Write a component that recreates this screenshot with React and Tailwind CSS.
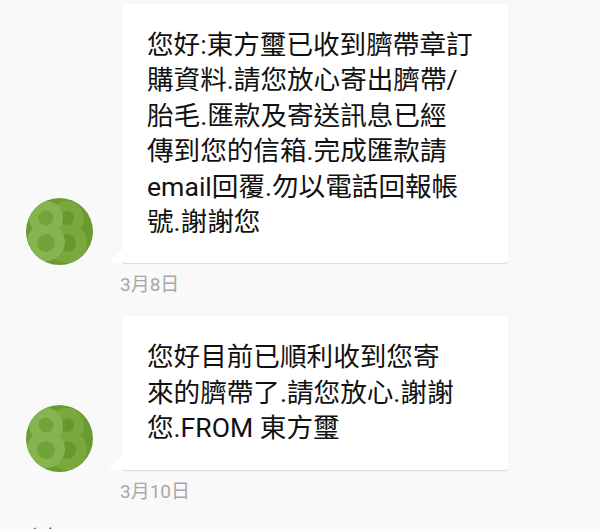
const FONT = "font-['Roboto','Noto_Sans_CJK_TC',sans-serif]";

function Avatar({ id }) {
  return (
    <svg width="67" height="67" viewBox="0 0 67 67" className="shrink-0">
      <defs>
        <clipPath id={id}>
          <circle cx="33.5" cy="33.5" r="33.5" />
        </clipPath>
      </defs>
      <g clipPath={`url(#${id})`}>
        <rect width="67" height="67" fill="#6b9a32" />
        <circle cx="41" cy="20" r="17" fill="#79a83e" />
        <circle cx="41" cy="45" r="20" fill="#79a83e" />
        <circle cx="41" cy="20" r="7" fill="#669730" />
        <circle cx="41" cy="45" r="9" fill="#669730" />
        <circle cx="20" cy="20" r="17" fill="#86b44e" />
        <circle cx="20" cy="44" r="19" fill="#86b44e" />
        <circle cx="20" cy="20" r="7.5" fill="#72a339" />
        <circle cx="20" cy="45" r="9" fill="#72a339" />
      </g>
    </svg>
  );
}

function Message({ id, lines, date, bubbleClass }) {
  return (
    <div>
      <div className="flex items-end">
        <div className="ml-[26px] mb-[-1px]">
          <Avatar id={id} />
        </div>
        <div className="relative ml-[29px] w-[386px] rounded-[4px] bg-white border-b border-[#dcdcdc] shadow-[0_0_3px_rgba(0,0,0,0.04)]">
          {/* tail */}
          <div className="absolute left-[-14px] bottom-0 w-[14px] h-[14px] bg-white [clip-path:polygon(100%_0,100%_100%,0_100%)]" />
          <div className={`pl-[25px] text-[26.6px] leading-[35.4px] text-[#111111] ${bubbleClass}`}>
            {lines.map((l) => (
              <div key={l} className="whitespace-nowrap">
                {l}
              </div>
            ))}
          </div>
        </div>
      </div>
      <div className="ml-[120px] mt-[9px] text-[19px] leading-[24px] text-[#a8a8a8]">
        {date}
      </div>
    </div>
  );
}

export default function App() {
  return (
    <div className={`w-[600px] h-[529px] overflow-hidden bg-[#f9f9f9] ${FONT}`}>
      <div className="pt-[4px]">
        <Message
          id="avatar-a"
          date="3月8日"
          bubbleClass="pt-[23px] pb-[24px]"
          lines={[
            "您好:東方璽已收到臍帶章訂",
            "購資料.請您放心寄出臍帶/",
            "胎毛.匯款及寄送訊息已經",
            "傳到您的信箱.完成匯款請",
            "email回覆.勿以電話回報帳",
            "號.謝謝您",
          ]}
        />
      </div>
      <div className="mt-[19px]">
        <Message
          id="avatar-b"
          date="3月10日"
          bubbleClass="pt-[23px] pb-[24px]"
          lines={["您好目前已順利收到您寄", "來的臍帶了.請您放心.謝謝", "您.FROM 東方璽"]}
        />
      </div>
      {/* next row, cut off by the bottom edge */}
      <div className="ml-[26px] mt-[22px] text-[19px] leading-[24px] text-[#555555]">上午</div>
    </div>
  );
}
